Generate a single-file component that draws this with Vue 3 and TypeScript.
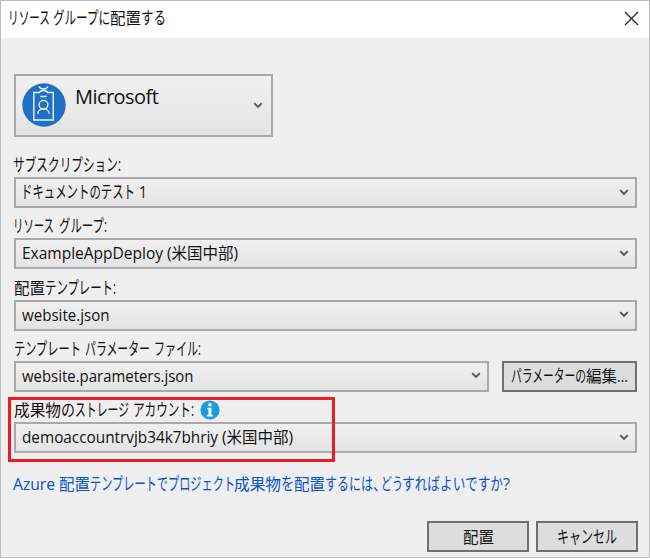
<script setup lang="ts">
import { defineComponent, h } from 'vue'

/** One stretch of text: content, left offset, set width. */
type Run = [text: string, x: number, width: number]

const isKana = (text: string) => /[\u3041-\u30ff]/.test(text)

const RunText = defineComponent({
  props: {
    runs: { type: Array as () => Run[], required: true },
    width: { type: Number, required: true },
  },
  setup(props) {
    return () =>
      h(
        'svg',
        { class: 'run-text', width: props.width, height: 22 },
        props.runs.map(([text, x, width]) =>
          h(
            'text',
            { class: { kana: isKana(text) }, x, y: 17, textLength: width, lengthAdjust: 'spacingAndGlyphs' },
            text,
          ),
        ),
      )
  },
})

interface Field {
  key: string
  label: Run[]
  value: Run[]
  button?: Run[]
  info?: boolean
}

const title: Run[] = [['リソース', 0, 42], ['グループに', 45, 57], ['配置', 102, 31], ['する', 133, 25]]

const fields: Field[] = [
  {
    key: 'subscription',
    label: [['サブスクリプション:', -1, 108]],
    value: [['ドキュメントのテスト', -1, 114], ['1', 117, 8]],
  },
  {
    key: 'group',
    label: [['リソース', -1, 41], ['グループ:', 45, 48]],
    value: [['ExampleAppDeploy', 0, 141], ['(米国中部)', 145, 71]],
  },
  {
    key: 'template',
    label: [['配置', 0, 31], ['テンプレート:', 31, 71]],
    value: [['website.json', 0, 87.5]],
  },
  {
    key: 'parameters',
    label: [['テンプレート', 0, 67], ['パラメーター', 71, 65], ['ファイル:', 140, 47]],
    value: [['website.parameters.json', 0, 171.5]],
    button: [['パラメーターの', 0, 75], ['編集', 75, 31], ['...', 106, 11]],
  },
  {
    key: 'storage',
    label: [['成果物', 0, 47], ['の', 47, 14], ['ストレージ', 61, 54], ['アカウント:', 119, 61]],
    value: [['demoaccountrvjb34k7bhriy', 0, 196], ['(米国中部)', 200, 71]],
    info: true,
  },
]

const link: Run[] = [
  ['Azure', -1, 42],
  ['配置', 45, 31],
  ['テンプレートで', 76, 78],
  ['プロジェクト', 154, 67],
  ['成果物', 220, 47],
  ['を', 267, 13],
  ['配置', 280, 31],
  ['するに', 311, 36],
  ['は', 347, 12],
  ['、', 359, 14],
  ['どう', 367, 22],
  ['すればよいですか', 388, 101],
  ['?', 489, 7],
]
const deploy: Run[] = [['配置', 0, 31]]
const cancel: Run[] = [['キャンセル', 0, 60]]
</script>

<template>
  <div class="dialog">
    <header class="titlebar">
      <RunText :runs="title" :width="180" />
      <svg class="close" width="15" height="15" viewBox="0 0 15 15"><path d="M1 1 14 14M14 1 1 14" /></svg>
    </header>
    <main class="content">
      <div class="box account">
        <svg class="badge" width="44" height="44" viewBox="0 0 44 44">
          <circle cx="22" cy="22" r="21.7" fill="#2170c4" />
          <g fill="none" stroke="#e9f4ff" stroke-width="1.4">
            <path d="M17.5 9.5H11.8V37H31.2V9.5H25.5" />
            <path d="M17 3.5Q18.2 6 21.5 6T26 3.5M17 10Q18.2 7.5 21.5 7.5T26 10M18.3 13.5H24.7" />
            <circle cx="21.5" cy="21.8" r="4.4" />
            <path d="M15.8 31C15.8 24.2 27.2 24.2 27.2 31" />
          </g>
        </svg>
        <span class="company">Microsoft</span>
        <svg class="chevron" width="10" height="7" viewBox="0 0 10 7"><path d="M1.2 1.1 5 4.9 8.8 1.1" /></svg>
      </div>
      <section v-for="field in fields" :key="field.key" class="field" :class="field.key">
        <div class="label">
          <RunText :runs="field.label" :width="189" />
          <svg v-if="field.info" class="info" width="20" height="20" viewBox="0 0 20 20">
            <circle cx="10" cy="10" r="9.6" fill="#1b9de2" />
            <path d="M8.5 3.2h3v3h-3zM7 7.7h4.5v7.3H13v1.5H7V15h1.5V9.2H7z" fill="#fff" />
          </svg>
        </div>
        <div class="controls">
          <div class="box select">
            <RunText :runs="field.value" :width="300" />
            <svg class="chevron" width="10" height="7" viewBox="0 0 10 7"><path d="M1.2 1.1 5 4.9 8.8 1.1" /></svg>
          </div>
          <button v-if="field.button" class="button edit">
            <RunText :runs="field.button" :width="117" />
          </button>
        </div>
      </section>
      <a class="help"><RunText :runs="link" :width="510" /></a>
      <footer class="actions">
        <button class="button"><RunText :runs="deploy" :width="31" /></button>
        <button class="button"><RunText :runs="cancel" :width="60" /></button>
      </footer>
    </main>
    <div class="highlight"></div>
  </div>
</template>

<style>
body {
  margin: 0;
}
</style>

<style scoped>
.dialog {
  position: relative;
  box-sizing: border-box;
  width: 650px;
  height: 558px;
  overflow: hidden;
  border: 1px solid #bdbdbd;
  background: #efefef;
  color: #111;
  font-family: "Open Sans", "Noto Sans CJK JP", sans-serif;
}
.dialog :deep(.run-text) {
  display: block;
  flex: none;
  overflow: visible;
  fill: currentColor;
  font-size: 16px;
}
.dialog :deep(.kana) {
  font-size: 17.5px;
}
.titlebar {
  display: flex;
  align-items: center;
  justify-content: space-between;
  box-sizing: border-box;
  height: 37px;
  padding: 0 10px 3px 7px;
  background: #fff;
}
.close path {
  fill: none;
  stroke: #222;
  stroke-width: 1.2;
}
.content {
  padding: 36px 12px 0 13px;
}
.box {
  display: flex;
  align-items: center;
  box-sizing: border-box;
  border: 2px solid #a9a9a9;
  background: linear-gradient(#f0f0f0, #e4e4e4);
}
.account {
  width: 259px;
  height: 63px;
  padding: 0 8px 1px 6px;
}
.company {
  align-self: flex-start;
  flex: 1;
  margin-left: 9px;
  padding-top: 7px;
  font-size: 20px;
  line-height: 28px;
  letter-spacing: -0.55px;
}
.chevron {
  flex: none;
}
.chevron path {
  fill: none;
  stroke: #555;
  stroke-width: 1.9;
}
.field {
  height: 61.3px;
}
.subscription {
  margin-top: 17px;
}
.label {
  display: flex;
  align-items: flex-start;
  height: 23px;
}
.info {
  margin: 1px 0 0 -3px;
}
.controls {
  display: flex;
  gap: 13px;
}
.select {
  flex: 1;
  justify-content: space-between;
  height: 31px;
  padding: 0 6px 1px;
}
.button {
  display: flex;
  align-items: center;
  justify-content: center;
  box-sizing: border-box;
  width: 102px;
  height: 31px;
  margin: 0;
  padding: 0;
  border: 2px solid #707070;
  background: #ddd;
  color: #111;
  font: inherit;
}
.edit {
  width: 135px;
}
.help {
  display: block;
  margin-top: 13px;
  color: #0b52c8;
}
.actions {
  display: flex;
  justify-content: flex-end;
  gap: 7px;
  margin: 26px -1px 0 0;
}
.highlight {
  position: absolute;
  left: 7px;
  top: 396px;
  box-sizing: border-box;
  width: 327px;
  height: 65px;
  border: 3px solid #ed1c24;
}
</style>
